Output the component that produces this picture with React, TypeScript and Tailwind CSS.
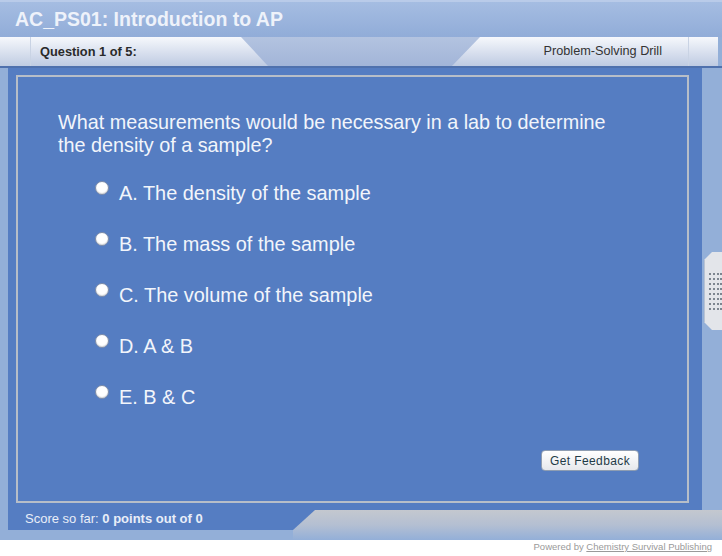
import React from "react";

const options = [
  "A. The density of the sample",
  "B. The mass of the sample",
  "C. The volume of the sample",
  "D. A & B",
  "E. B & C",
];

export default function App() {
  const dots = Array.from({ length: 32 });
  return (
    <div className="relative w-[722px] h-[556px] bg-white font-['Liberation_Sans',Arial,sans-serif] overflow-hidden">
      <div className="relative flex flex-col h-[540px]">
        {/* Title bar */}
        <div className="h-[37px] flex items-center pl-[15px] bg-gradient-to-b from-[#a5bde2] to-[#91acd8] border-t-2 border-[#b9cbe9]">
          <span className="text-[19.5px] font-bold text-[#eef2fa] leading-none">
            AC_PS01: Introduction to AP
          </span>
        </div>
        {/* Tab bar */}
        <div className="h-[31px] flex bg-gradient-to-b from-[#b3c3e0] to-[#a2b5d8] border-b-[2px] border-[#4f71ad]">
          <div className="w-[31px] bg-gradient-to-b from-[#f6f8fc] to-[#c0cce2] border-r border-[#c9d3e4]" />
          <div className="w-[237px] flex items-center pl-[9px] bg-gradient-to-b from-[#f6f8fc] to-[#bfcbe2] [clip-path:polygon(0_0,210px_0,100%_100%,0_100%)]">
            <span className="text-[12.8px] font-bold text-[#2a2a2a]">Question 1 of 5:</span>
          </div>
          <div className="flex-1" />
          <div className="w-[236px] flex items-center justify-end pr-[26px] bg-gradient-to-b from-[#f6f8fc] to-[#bfcbe2] [clip-path:polygon(28px_0,100%_0,100%_100%,0_100%)]">
            <span className="text-[12.7px] text-[#333]">Problem-Solving Drill</span>
          </div>
          <div className="w-[30px] bg-gradient-to-b from-[#f6f8fc] to-[#bfcbe2] border-l border-[#c9d3e4]" />
          <div className="w-[4px] bg-[#93afd8]" />
        </div>
        {/* Body */}
        <div className="flex h-[462px]">
          <div className="w-[8px] bg-[#93afd8]" />
          <div className="w-[694px] bg-[#557dc2] flex flex-col pt-[7px] pl-[8px] pr-[13px]">
            <div className="h-[428px] border-2 border-[#b7bec8] flex flex-col pl-[40px] pt-[34px]">
              <div className="text-[19.8px] leading-[23px] text-[#f2f5fb]">
                What measurements would be necessary in a lab to determine
                <br />
                the density of a sample?
              </div>
              <div className="flex flex-col pl-[37px] pt-[25px]">
                {options.map((o) => (
                  <div key={o} className="h-[51px] flex items-start">
                    <div className="w-[14px] h-[14px] mt-[-1px] rounded-full bg-white border border-[#7a8aa8] shadow-[inset_0_-1px_1px_rgba(0,0,0,0.15)]" />
                    <span className="ml-[10px] text-[19.9px] leading-[23px] text-[#f2f5fb]">{o}</span>
                  </div>
                ))}
              </div>
              <div className="flex justify-end pr-[48px] mt-[13px]">
                <button className="w-[98px] h-[21px] rounded-[4px] border border-[#8e9db2] bg-gradient-to-b from-white to-[#e6e8ec] text-[12px] tracking-[0.4px] text-[#1f3b47] leading-none">
                  Get Feedback
                </button>
              </div>
            </div>
            <div className="pl-[9px] pt-[6px] text-[13px] text-[#e9eef8]">
              Score so far: <span className="font-bold">0 points out of 0</span>
            </div>
          </div>
          <div className="relative w-[20px] bg-[#93afd8]">
            <div className="absolute left-[2px] top-[184px] w-[18px] h-[78px] bg-[#e3e5ea] border-l border-[#b9c3d3] [clip-path:polygon(8px_0,100%_0,100%_100%,8px_100%,0_calc(100%-8px),0_8px)]">
              <div className="grid grid-cols-4 gap-x-[2px] gap-y-[3px] pl-[4px] pt-[21px] w-fit">
                {dots.map((_, i) => (
                  <div key={i} className="w-[2px] h-[2px] bg-[#7d8590]" />
                ))}
              </div>
            </div>
          </div>
        </div>
        {/* bottom strip */}
        <div className="h-[10px] bg-[#93afd8]" />
        {/* grey footer tab */}
        <div className="absolute left-[293px] top-[510px] w-[429px] h-[30px] bg-gradient-to-b from-[#c4c8cf] via-[#b4bfd2] to-[#93afd8] [clip-path:polygon(22px_0,100%_0,100%_100%,0_100%,0_20px)]" />
      </div>
      <div className="absolute right-[10px] top-[541px] text-[9.5px] text-[#9a9a9a] leading-[12px]">
        Powered by <span className="underline">Chemistry Survival Publishing</span>
      </div>
    </div>
  );
}
